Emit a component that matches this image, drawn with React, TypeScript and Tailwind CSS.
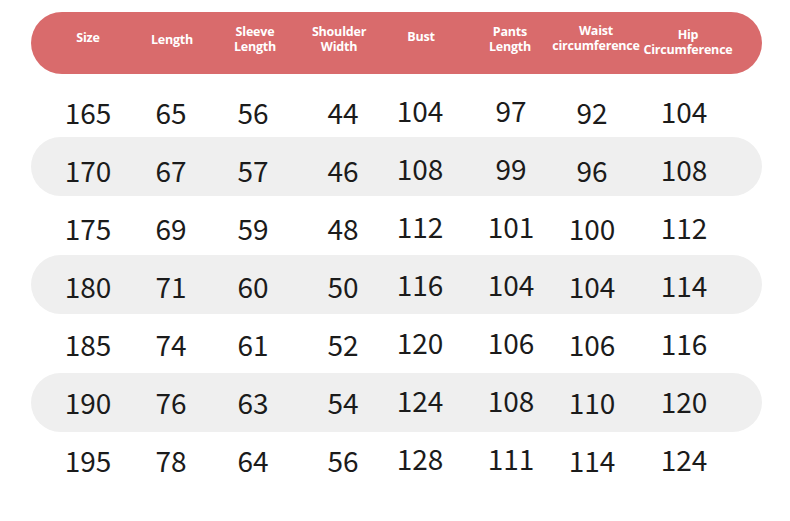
const HEADERS: string[][] = [
  ['Size'],
  ['Length'],
  ['Sleeve', 'Length'],
  ['Shoulder', 'Width'],
  ['Bust'],
  ['Pants', 'Length'],
  ['Waist', 'circumference'],
  ['Hip', 'Circumference'],
]

// top padding for each header cell, so the labels sit where the chart has them
const HEAD_PAD = ['pt-[18px]', 'pt-[20px]', 'pt-[12px]', 'pt-[12px]', 'pt-[17px]', 'pt-[12px]', 'pt-[11px]', 'pt-[15px]']

// small per-column nudges for the numbers
const NUM_SHIFT = ['', '-translate-x-[1px]', '-translate-x-[2px]', 'translate-x-[4px]', '-translate-x-[1px] -translate-y-[2px]', 'translate-x-[1px] -translate-y-[2px]', '-translate-x-[4px]', '-translate-x-[4px] -translate-y-[1px]']

// text drifts up a little row by row
const ROW_PAD = ['pt-[19px]', 'pt-[18px]', 'pt-[17px]', 'pt-[16px]', 'pt-[15px]', 'pt-[14px]', 'pt-[13px]']

const ROWS: number[][] = [
  [165, 65, 56, 44, 104, 97, 92, 104],
  [170, 67, 57, 46, 108, 99, 96, 108],
  [175, 69, 59, 48, 112, 101, 100, 112],
  [180, 71, 60, 50, 116, 104, 104, 114],
  [185, 74, 61, 52, 120, 106, 106, 116],
  [190, 76, 63, 54, 124, 108, 110, 120],
  [195, 78, 64, 56, 128, 111, 114, 124],
]

const GRID = 'grid grid-cols-[84px_84px_82px_86px_78px_100px_72px_112px] pl-[15px]'

export default function App() {
  return (
    <div className="w-[790px] h-[521px] bg-white pt-[12px] pl-[31px]">
      <div className="w-[731px]">
        <div className={`${GRID} h-[62px] rounded-full bg-[#d96b6c] text-white`}>
          {HEADERS.map((lines, i) => (
            <div key={i} className={`flex flex-col items-center ${HEAD_PAD[i]}`}>
              {lines.map(l => (
                <span
                  key={l}
                  className="whitespace-nowrap text-[12.5px] font-bold leading-[15px] tracking-[-0.2px]"
                  style={{ fontFamily: '"Open Sans", sans-serif' }}
                >
                  {l}
                </span>
              ))}
            </div>
          ))}
        </div>

        <div className="mt-[4px]">
          {ROWS.map((row, r) => (
            <div
              key={r}
              className={`${GRID} h-[59px] rounded-full ${r % 2 === 1 ? 'bg-[#efefef]' : ''}`}
            >
              {row.map((v, c) => (
                <div key={c} className={`flex justify-center ${ROW_PAD[r]}`}>
                  <span
                    className={`text-[28px] leading-[30px] text-[#1b1b1b] ${NUM_SHIFT[c]}`}
                    style={{ fontFamily: '"Noto Sans CJK SC", sans-serif' }}
                  >
                    {v}
                  </span>
                </div>
              ))}
            </div>
          ))}
        </div>
      </div>
    </div>
  )
}
